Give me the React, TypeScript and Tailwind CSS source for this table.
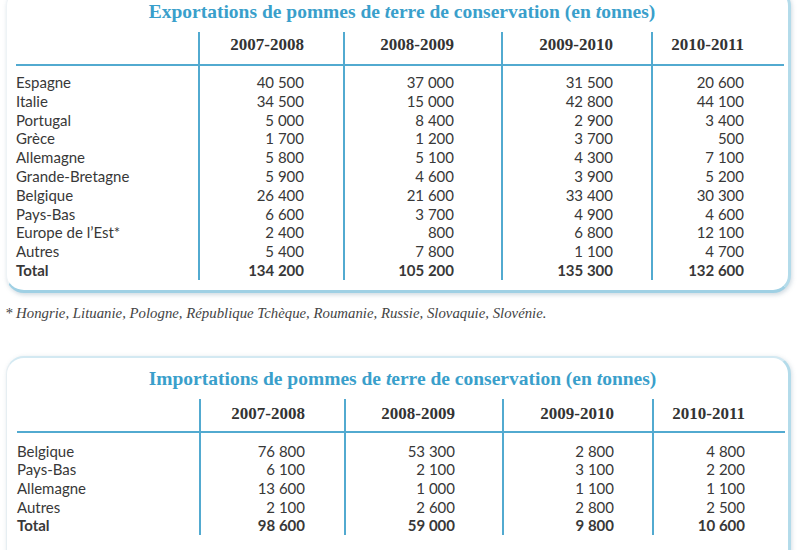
import React from "react"

type Row = [string, string, string, string, string]

const years = ["2007-2008", "2008-2009", "2009-2010", "2010-2011"]
const pads = ["pr-[39px]", "pr-[47px]", "pr-[38px]", "pr-[40px]"]

const exportsRows: Row[] = [
  ["Espagne", "40 500", "37 000", "31 500", "20 600"],
  ["Italie", "34 500", "15 000", "42 800", "44 100"],
  ["Portugal", "5 000", "8 400", "2 900", "3 400"],
  ["Grèce", "1 700", "1 200", "3 700", "500"],
  ["Allemagne", "5 800", "5 100", "4 300", "7 100"],
  ["Grande-Bretagne", "5 900", "4 600", "3 900", "5 200"],
  ["Belgique", "26 400", "21 600", "33 400", "30 300"],
  ["Pays-Bas", "6 600", "3 700", "4 900", "4 600"],
  ["Europe de l’Est*", "2 400", "800", "6 800", "12 100"],
  ["Autres", "5 400", "7 800", "1 100", "4 700"],
  ["Total", "134 200", "105 200", "135 300", "132 600"],
]

const importsRows: Row[] = [
  ["Belgique", "76 800", "53 300", "2 800", "4 800"],
  ["Pays-Bas", "6 100", "2 100", "3 100", "2 200"],
  ["Allemagne", "13 600", "1 000", "1 100", "1 100"],
  ["Autres", "2 100", "2 600", "2 800", "2 500"],
  ["Total", "98 600", "59 000", "9 800", "10 600"],
]

const serif = { fontFamily: '"Liberation Serif", serif' }
const sans = { fontFamily: "Lato, sans-serif" }

function Title({ kind }: { kind: string }) {
  return (
    <h2 className="text-center text-[19.5px] leading-[22px] font-bold text-[#3a9fcb]" style={serif}>
      {kind} de pommes de <i>t</i>erre de conservation (en <i>t</i>onnes)
    </h2>
  )
}

function DataTable({ rows, headPad, bodyPad, pitch }: { rows: Row[]; headPad: string; bodyPad: string; pitch: string }) {
  const line = "border-l-2 border-[#52aad0]"
  return (
    <div className="grid grid-cols-[182px_145px_158px_150px_133px] text-[#383838]">
      <div className="h-[34px] border-b-2 border-[#52aad0]" />
      {years.map((y, i) => (
        <div
          key={y}
          className={`h-[34px] border-b-2 border-[#52aad0] ${line} ${headPad} ${pads[i]} text-right text-[17px] leading-[18px] font-bold text-[#333]`}
          style={serif}
        >
          {y}
        </div>
      ))}
      <div className={bodyPad} style={sans}>
        {rows.map((r, k) => (
          <div key={k} className={`${pitch} text-[15px] ${k === rows.length - 1 ? "font-bold" : ""}`}>
            {r[0]}
          </div>
        ))}
      </div>
      {years.map((y, i) => (
        <div key={y} className={`${line} ${bodyPad} ${pads[i]} text-right`} style={sans}>
          {rows.map((r, k) => (
            <div key={k} className={`${pitch} text-[15px] ${k === rows.length - 1 ? "font-bold" : ""}`}>
              {r[i + 1]}
            </div>
          ))}
        </div>
      ))}
    </div>
  )
}

export default function App() {
  return (
    <div className="w-[800px] h-[550px] overflow-hidden bg-white">
      <div className="ml-[6px] mr-[9px] -mt-3 pt-[12px] pb-[10px] pl-[9px] bg-white rounded-[18px] border border-[#eef3f6] border-r-[3px] border-r-[#b3dbea] border-b-[3px] border-b-[#9fd0e4] shadow-[1px_2px_4px_rgba(120,150,170,0.35)]">
        <Title kind="Exportations" />
        <div className="mt-[9px]">
          <DataTable rows={exportsRows} headPad="pt-[4px]" bodyPad="pt-[7px]" pitch="leading-[18.8px]" />
        </div>
      </div>

      <p className="mt-[11px] pl-[5px] text-[14.8px] leading-[18px] italic text-[#444]" style={serif}>
        * Hongrie, Lituanie, Pologne, République Tchèque, Roumanie, Russie, Slovaquie, Slovénie.
      </p>

      <div className="mt-[34px] ml-[6px] mr-[9px] h-[220px] pt-[10px] pl-[10px] bg-white rounded-[18px] border border-[#e6eef2] border-r-[3px] border-r-[#b3dbea] border-t-[2px] border-t-[#d3e9f2] shadow-[1px_1px_4px_rgba(120,150,170,0.3)]">
        <Title kind="Importations" />
        <div className="mt-[9px]">
          <DataTable rows={importsRows} headPad="pt-[6px]" bodyPad="pt-[9px]" pitch="leading-[18.6px]" />
        </div>
      </div>
    </div>
  )
}
